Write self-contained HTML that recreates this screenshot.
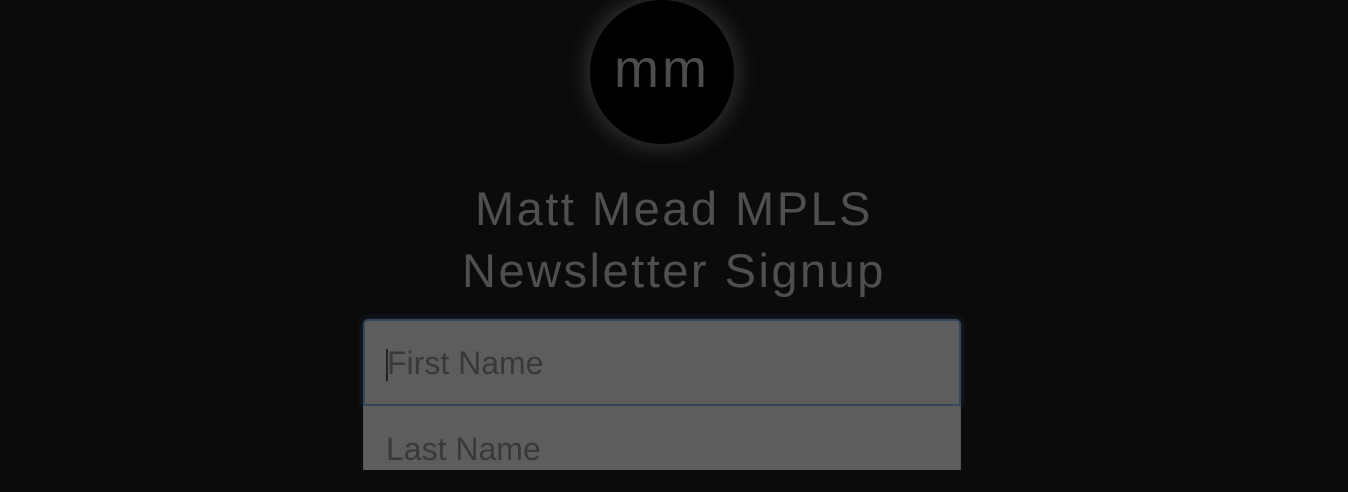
<!DOCTYPE html>
<html><head><meta charset="utf-8"><style>
html,body{margin:0;padding:0;background:#0b0b0b;width:1348px;height:470px;overflow:hidden;font-family:"Liberation Sans",sans-serif}
.logo{position:absolute;left:590px;top:0;width:144px;height:144px;border-radius:50%;background:#000;box-shadow:0 0 22px 4px rgba(120,120,120,.35);color:#4c4c4c;font-size:54px;text-align:center;line-height:138px;letter-spacing:3px}
.title{position:absolute;left:0;width:1348px;top:178px;text-align:center;color:#4f4f4f;font-size:47px;line-height:62px;letter-spacing:2.5px}
.in{position:absolute;left:363px;width:598px;background:#5d5d5d;color:#393939;font-size:32px;box-sizing:border-box;padding-left:22px}
.a{top:319px;height:87px;border:2px solid #34465a;border-radius:5px 5px 0 0;line-height:84px;box-shadow:0 0 8px rgba(60,90,130,.4)}
.b{top:406px;height:64px;line-height:86px;border-left:1px solid #555;border-right:1px solid #555}
.cur{position:absolute;left:21px;top:28px;width:2px;height:32px;background:#222}
</style></head><body>
<div class="logo">mm</div>
<div class="title">Matt Mead MPLS<br>Newsletter Signup</div>
<div class="in a"><span class="cur"></span>First Name</div>
<div class="in b">Last Name</div>
</body></html>
